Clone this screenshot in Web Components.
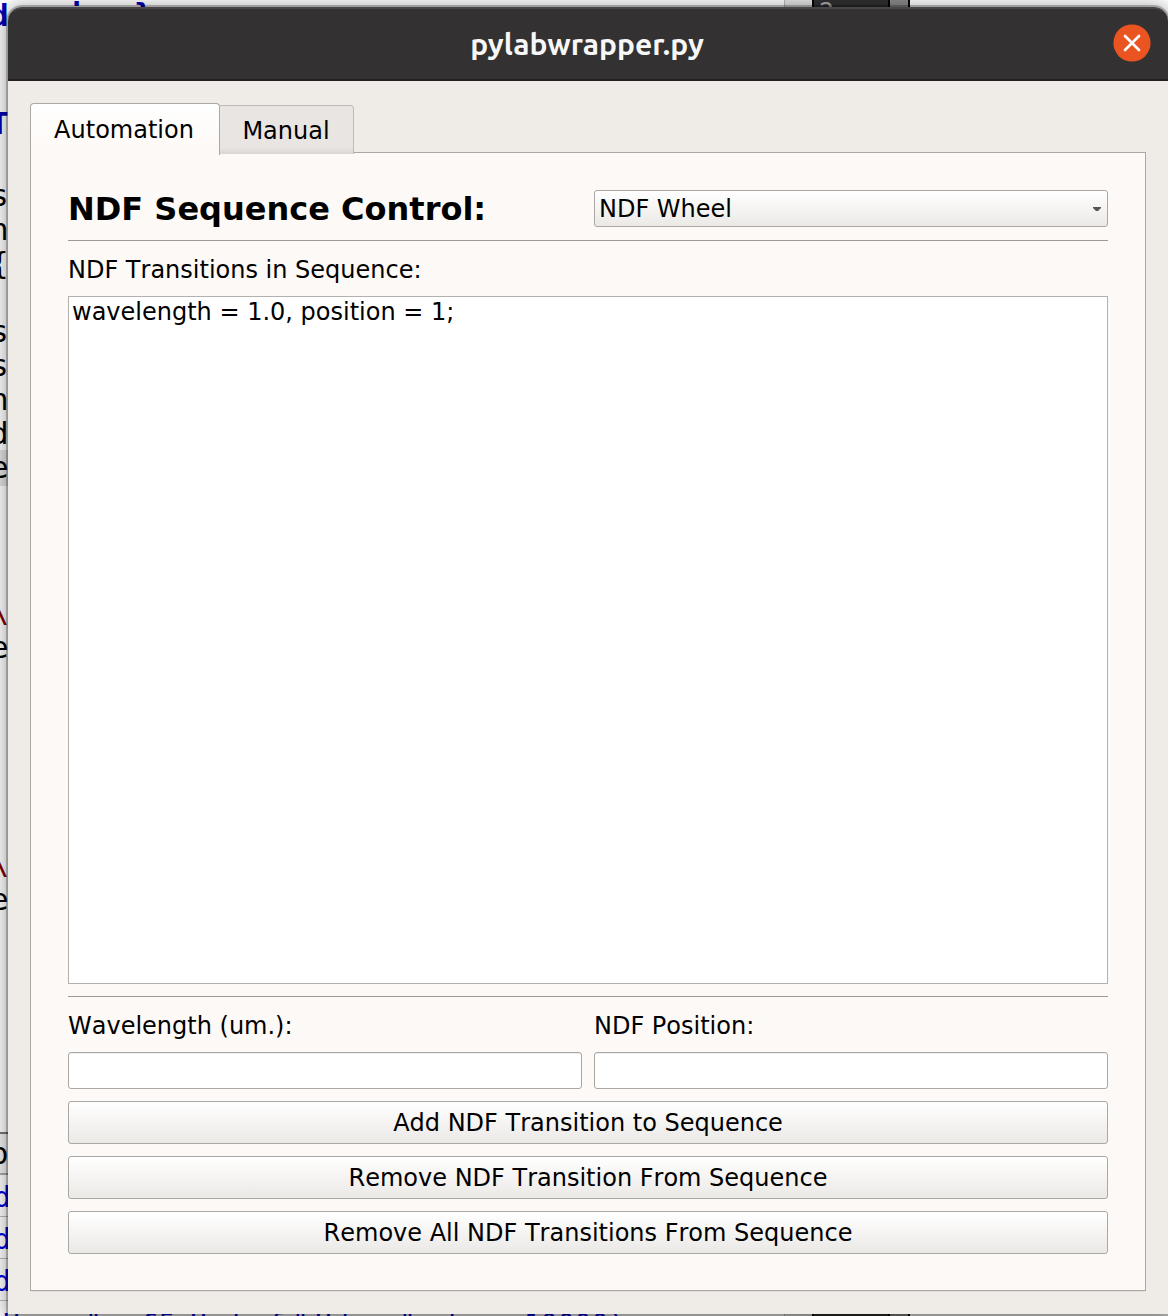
<!DOCTYPE html>
<html lang="en">
<head>
<meta charset="utf-8">
<title>pylabwrapper.py</title>
<style>
html,body{margin:0;height:1316px;overflow:hidden}
body{font-family:"DejaVu Sans",sans-serif;font-size:24px;color:#000;background:#fff;font-kerning:none}
</style>
</head>
<body>
<desk-top>
  <app-window heading="pylabwrapper.py">
    <tab-pane>
      <form-row><h-title slot="a">NDF Sequence Control:</h-title><combo-box slot="b">NDF Wheel</combo-box></form-row>
      <rule-line></rule-line>
      <text-label>NDF Transitions in Sequence:</text-label>
      <list-box>wavelength = 1.0, position = 1;</list-box>
      <rule-line style="--mt:12px"></rule-line>
      <form-row><text-label slot="a">Wavelength (um.):</text-label><text-label slot="b">NDF Position:</text-label></form-row>
      <form-row><line-edit slot="a"></line-edit><line-edit slot="b"></line-edit></form-row>
      <push-button>Add NDF Transition to Sequence</push-button>
      <push-button>Remove NDF Transition From Sequence</push-button>
      <push-button>Remove All NDF Transitions From Sequence</push-button>
    </tab-pane>
  </app-window>
</desk-top>
<script>
const define = (name, html, setup) => customElements.define(name, class extends HTMLElement {
  constructor(){
    super();
    this.attachShadow({mode:'open'}).innerHTML = html;
  }
  connectedCallback(){ if (setup) setup(this, this.shadowRoot); }
});

define('desk-top', `<style>
:host{display:block;position:relative;width:1168px;height:1316px;overflow:hidden;background:#fff;box-sizing:border-box;padding:7px 0 2px 8px}
.back{position:absolute;inset:0;overflow:hidden;font-family:"DejaVu Sans Mono",monospace;font-size:30px;line-height:36px}
.back i{position:absolute;display:block}
.back span{position:absolute;white-space:pre}
.back .l{right:1159.5px}
.b{font-weight:bold;color:#0000b4}.back .r{color:#800000;right:1159px}.u{color:#0000e0;font-size:28px}.back .u.l{right:1157.5px}
slot{position:relative;display:block}
</style><div class="back"></div><slot></slot>`, (h, root) => {
  const back = root.querySelector('.back');
  const bar = (x,y,w,hh,c) => { const e=document.createElement('i'); e.style.cssText=`left:${x}px;top:${y}px;width:${w}px;height:${hh}px;background:${c}`; back.append(e); };
  const txt = (t,base,cls,x) => { const e=document.createElement('span'); e.textContent=t; e.className=cls+(x===undefined?' l':''); e.style.top=(base-28)+'px'; if(x!==undefined) e.style.left=x+'px'; back.append(e); };
  bar(0,450,8,36,'#e2e2e2');
  bar(0,1132,8,2,'#777'); bar(0,1134,8,39,'#f2f2f2'); bar(0,1173,8,2,'#aaa');
  [1216,1258,1300].forEach(y => bar(0,y,8,1,'#bbb'));
  for (const y of [0,1310]) {
    bar(784,y,28,9,'#e4e4e4'); bar(784,y,1,9,'#bbb');
    bar(812,y,98,9,'#000'); bar(814,y,74,9,'#303030'); bar(890,y,18,9,'#8b8b8b');
  }
  txt('d',26,'b'); txt('T',134,'b');
  [['s',206],['n',240],['{',274],['s',342],['s',376],['n',410],['d',444],['e',478],['e',658],['e',910],['o',1164]].forEach(a => txt(a[0],a[1],''));
  txt('\\\\',622,'r'); txt('\\\\',874,'r');
  [1208,1250,1292].forEach(b => txt('d',b,'u'));
  txt('i',26,'b',67); txt('}',25,'b',134);
  [['H',3],['"',85],['65',142],['U',190],['t',229],['f',268],['"',292],['U',315],['t',338],['"',399],['t',445],['10000);',524]].forEach(a => txt(a[0],1335,'u',a[1]));
  const q=document.createElement('span');q.textContent='2';q.style.cssText='left:819px;top:-2px;color:#aaa;font:24px "DejaVu Sans"';back.append(q);
});

define('app-window', `<style>
:host{display:flex;flex-direction:column;height:1307px;background:#efebe7;border-radius:14px 14px 0 0;
 box-shadow:0 0 0 2px rgba(0,0,0,.24),0 2px 18px 3px rgba(0,0,0,.36)}
header{height:74px;box-sizing:border-box;flex:none;display:grid;grid-template-columns:1fr auto;align-items:center;background:#333132;border-top:2px solid #484648;border-bottom:2px solid #231f20;border-radius:14px 14px 0 0;padding-right:17px}
b{font:bold 30px "Ubuntu","Noto Sans",sans-serif;color:#f7f7f7;text-align:center;padding-left:53px;letter-spacing:0;line-height:36px}
svg{display:block;margin-bottom:2px}
main{flex:1;display:flex;flex-direction:column;padding:22px 22px 23px}
slot{display:flex;flex-direction:column;flex:1}
</style><header><b></b><svg width="38" height="38" viewBox="0 0 38 38"><circle cx="19" cy="19" r="18.6" fill="#e95420"/><path d="M12 12 26 26M26 12 12 26" stroke="#fff" stroke-width="2.7" stroke-linecap="round"/></svg></header><main><slot></slot></main>`,
(h, root) => root.querySelector('b').textContent = h.getAttribute('heading'));

define('tab-pane', `<style>
:host{display:flex;flex-direction:column;flex:1}
nav{display:flex;align-items:flex-start;height:49px;position:relative;z-index:1}
.t{box-sizing:border-box;border:1px solid #aba7a3;border-bottom:0;border-radius:4px 4px 0 0;display:flex;justify-content:center}
.on{width:190px;height:52px;background:linear-gradient(#fff,#fdf9f6 90%);line-height:53px;padding-right:2px;border-radius:4px 4px 0 0}
.off{width:135px;height:49px;margin:2px 0 0 -1px;border-color:#bdb9b5;background:linear-gradient(#e9e5e2 86%,#dad7d3);line-height:50px;padding-right:1px;border-left-color:transparent;border-radius:0 4px 0 0;background-clip:padding-box}
section{flex:1;display:flex;flex-direction:column;border:1px solid #aba7a3;background:#fdf9f6;padding:37px 37px 36px;box-shadow:0 1px #e2deda}
slot{display:contents}
</style><nav><div class="t on">Automation</div><div class="t off">Manual</div></nav><section><slot></slot></section>`);

define('form-row', `<style>
:host{display:grid;grid-template-columns:514px 514px;column-gap:12px;align-items:center}
</style><slot name="a"></slot><slot name="b"></slot>`);

define('h-title', `<style>:host{display:block;height:37px;font-weight:bold;font-size:32px;line-height:39px;white-space:nowrap}</style><slot></slot>`);

define('combo-box', `<style>
:host{display:flex;justify-content:space-between;align-items:center;height:37px;box-sizing:border-box;border:1px solid #aba7a3;border-radius:3px;background:linear-gradient(#fff,#ebe9e6);padding:0 6px 0 4px;line-height:34px}
svg{display:block}
</style><span><slot></slot></span><svg width="8" height="4" viewBox="0 0 8 4"><path d="M0 0H8V1L5 4H3L0 1Z" fill="#555"/></svg>`);

define('rule-line', `<style>:host{display:block;height:1px;flex:none;background:#9c9996;margin-top:var(--mt,13px)}</style>`);

define('text-label', `<style>:host{display:block;height:55px;line-height:59px;white-space:nowrap}</style><slot></slot>`);

define('list-box', `<style>:host{display:block;height:688px;flex:none;box-sizing:border-box;border:1px solid #b3b0ad;background:#fff;padding:0 3px;line-height:30px}</style><slot></slot>`);

define('line-edit', `<style>:host{display:block;height:37px;box-sizing:border-box;border:1px solid #aba7a3;border-radius:3px;background:#fff;box-shadow:inset 0 1px #eee}</style>`);

define('push-button', `<style>:host{display:block;margin-top:12px;height:43px;box-sizing:border-box;border:1px solid #aba7a3;border-radius:3px;background:linear-gradient(#fff,#ebe9e6);text-align:center;line-height:43px}</style><slot></slot>`);
</script>
</body>
</html>
